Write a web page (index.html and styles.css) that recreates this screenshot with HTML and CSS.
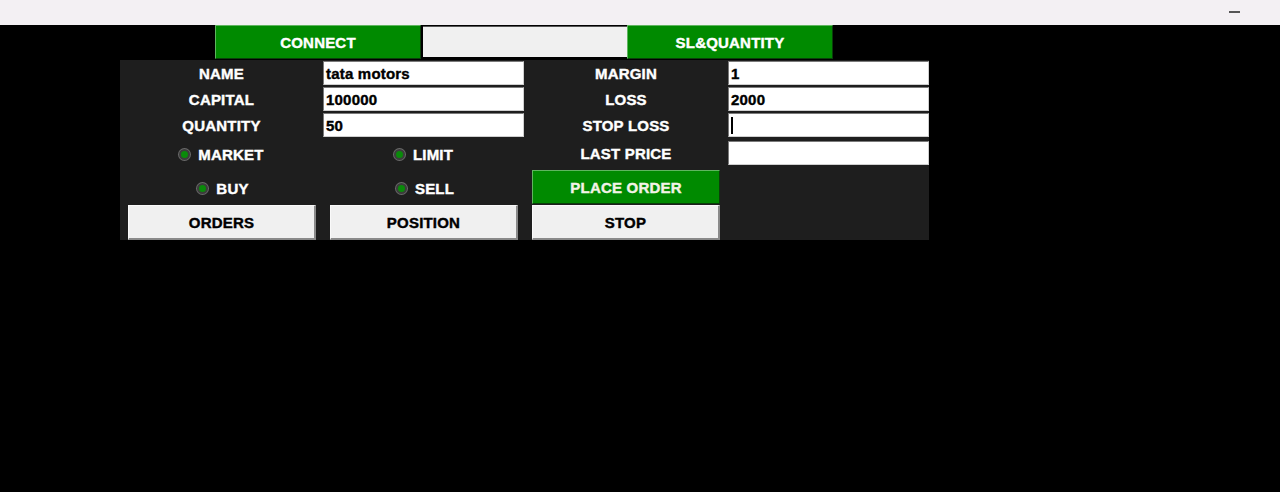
FILE: index.html
```html
<!DOCTYPE html>
<html>
<head>
<meta charset="utf-8">
<link rel="stylesheet" href="styles.css">
</head>
<body>
<div class="titlebar"><span class="minimize"></span></div>
<div class="topbar">
  <button class="btn green wide">CONNECT</button>
  <div class="status-entry"></div>
  <button class="btn green wide">SL&amp;QUANTITY</button>
</div>
<div class="panel">
  <div class="fields">
    <div class="label">NAME</div>
    <div class="entry">tata motors</div>
    <div class="label">MARGIN</div>
    <div class="entry">1</div>

    <div class="label">CAPITAL</div>
    <div class="entry">100000</div>
    <div class="label">LOSS</div>
    <div class="entry">2000</div>

    <div class="label">QUANTITY</div>
    <div class="entry">50</div>
    <div class="label">STOP LOSS</div>
    <div class="entry"><span class="caret"></span></div>

    <div class="radio-cell"><span class="radio"></span>MARKET</div>
    <div class="radio-cell"><span class="radio"></span>LIMIT</div>
    <div class="label">LAST PRICE</div>
    <div class="entry"></div>
  </div>
  <div class="actions">
    <div class="radio-cell"><span class="radio"></span>BUY</div>
    <div class="radio-cell"><span class="radio"></span>SELL</div>
    <button class="btn green">PLACE ORDER</button>
    <button class="btn gray">ORDERS</button>
    <button class="btn gray">POSITION</button>
    <button class="btn gray">STOP</button>
  </div>
</div>
</body>
</html>
```

FILE: styles.css
```css
* { box-sizing: border-box; }
html, body {
  margin: 0;
  padding: 0;
  background: #000;
  font-family: "Liberation Sans", Arial, sans-serif;
  font-weight: bold;
  font-size: 15px;
  height: 100%;
}
.titlebar {
  height: 25px;
  background: #f3f0f3;
  position: relative;
}
.minimize {
  position: absolute;
  left: 1229px;
  top: 11px;
  width: 11px;
  height: 1.5px;
  background: #555;
}
.topbar {
  display: flex;
  align-items: flex-start;
  margin-left: 215px;
  height: 35px;
}
.btn {
  font-family: inherit;
  font-weight: bold;
  font-size: 15px;
  -webkit-text-stroke: 0.4px currentColor;
  letter-spacing: 0.2px;
  margin: 0;
  padding: 0;
  display: flex;
  align-items: center;
  justify-content: center;
  cursor: default;
}
.green {
  background: #008a00;
  color: #fff;
  border: 1px solid;
  border-color: #5fb55f #0a3f0a #0a3f0a #5fb55f;
}
.gray {
  background: #f0f0f0;
  color: #000;
  border: 1px solid;
  border-color: #fafafa #8a8a8a #8a8a8a #fafafa;
  border-width: 1px 2px 2px 1px;
}
.wide {
  width: 206px;
  height: 34px;
}
.status-entry {
  width: 204px;
  height: 31px;
  margin: 1px 0 0 2px;
  background: #f0f0f0;
  border-top: 1px solid #555;
}
.panel {
  margin-left: 120px;
  width: 809px;
  height: 180px;
  background: #1e1e1e;
}
.fields {
  display: grid;
  grid-template-columns: 203px 201px 204px 201px;
  grid-template-rows: 24px 24px 24px 28px;
  row-gap: 2px;
  padding-top: 1px;
  align-items: center;
}
.label, .radio-cell, .entry {
  -webkit-text-stroke: 0.4px currentColor;
  letter-spacing: 0.2px;
}
.label {
  color: #fff;
  text-align: center;
  line-height: 24px;
  padding-top: 2px;
}
.entry {
  height: 24px;
  background: #fff;
  color: #000;
  border: 1px solid;
  border-color: #7a7a7a #cfcfcf #cfcfcf #7a7a7a;
  padding: 2px 0 0 2px;
  line-height: 20px;
  display: flex;
  align-items: center;
}
.caret {
  width: 2px;
  height: 17px;
  background: #000;
  margin-top: -2px;
}
.radio-cell {
  color: #fff;
  display: flex;
  align-items: center;
  justify-content: center;
  gap: 8px;
  padding-top: 2px;
}
.radio {
  width: 11px;
  height: 11px;
  border-radius: 50%;
  background: #0a8a0a;
  border: 2px solid #3c3c3c;
  box-shadow: 0 0 0 1px #6a6a6a;
  -webkit-text-stroke: 0;
}
.actions {
  display: grid;
  grid-template-columns: 188px 188px 188px;
  grid-template-rows: 34px 35px;
  column-gap: 14px;
  row-gap: 1px;
  padding-left: 8px;
  margin-top: 3px;
}
.actions .radio-cell {
  padding-left: 2px;
}
.actions .btn.green {
  color: #f3f3e6;
}
```
